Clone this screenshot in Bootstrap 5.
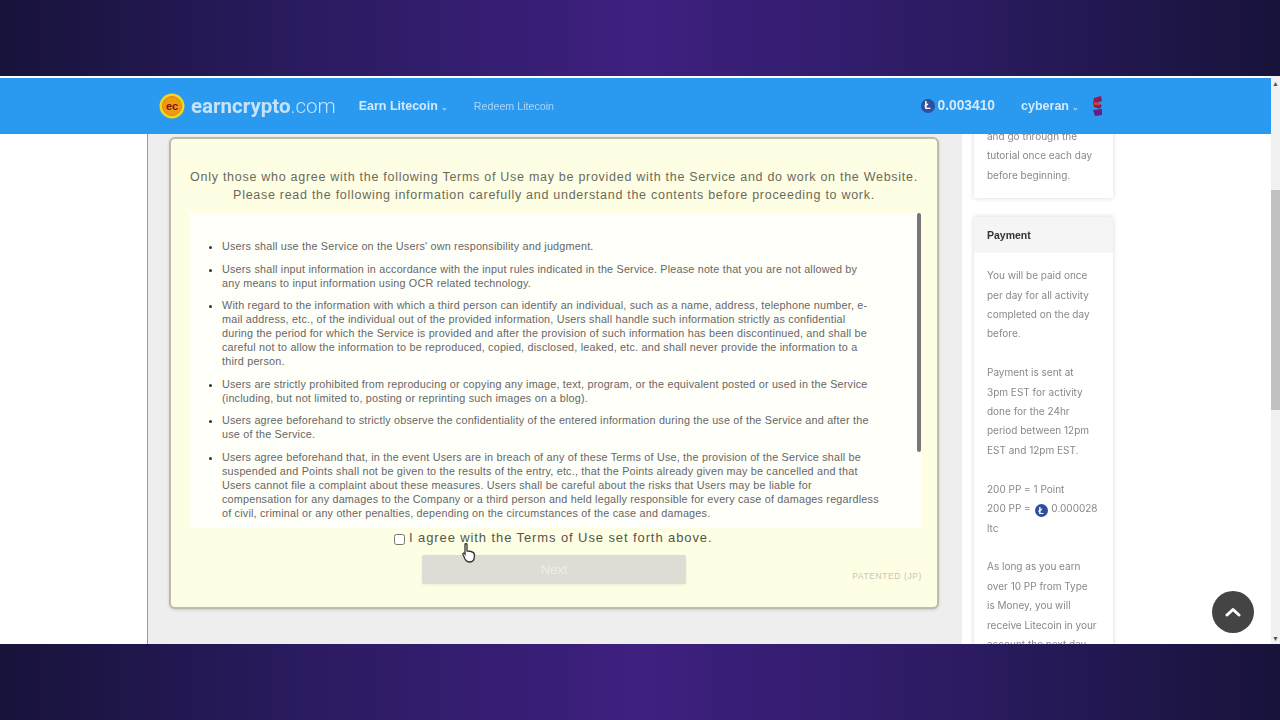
<!DOCTYPE html>
<html lang="en">
<head>
  <meta charset="UTF-8">
  <meta name="viewport" content="width=device-width, initial-scale=1.0">
  <title>earncrypto.com</title>
  <link rel="stylesheet" href="https://cdn.jsdelivr.net/npm/bootstrap@5.3.1/dist/css/bootstrap.min.css">
  <style>
    html, body { height: 720px; overflow: hidden; }
    body { background: #fff; font-family: "Liberation Sans", Arial, sans-serif; }

    .band { height: 76px; background: linear-gradient(90deg, #17133a 0%, #2c1b62 25%, #3e2080 50%, #2c1b62 75%, #17133a 100%); }
    .screen { height: 568px; position: relative; filter: blur(.5px); }
    .stripe { height: 2px; background: #fff; }
    .vbar { width: 9px; background: #f1f1f1; font-size: 7px; color: #555; text-align: center; }
    .vbar-top { height: 38px; line-height: 16px; }
    .vbar-thumb { height: 220px; background: #c1c1c1; margin-top: 76px; }
    .vbar-end { line-height: 10px; margin-top: auto; }

    /* navbar */
    .topbar { height: 56px; background: #2a9af0; padding: 0 0 0 159px; }
    .brand-name { font-family: "Roboto", sans-serif; font-size: 20.5px; font-weight: 700; color: #c6e2fb; margin-left: 6px; }
    .brand-name span { font-weight: 300; }
    .earn-link { font-size: 12.5px; font-weight: 700; color: #d3e9fc; margin-left: 23px; }
    .redeem-link { font-size: 10.7px; color: #a9d5f9; margin-left: 26px; }
    .tiny-caret { font-size: 8px; margin-left: 3px; opacity: .75; }
    .balance { font-size: 13.8px; font-weight: 700; color: #d3e9fc; margin-left: auto; margin-right: 26px; }
    .user-name { font-size: 12.5px; font-weight: 700; color: #d3e9fc; margin-right: 12px; }
    .user-pic { margin-right: 168px; }
    .ltc { display: inline-flex; align-items: center; justify-content: center; width: 14px; height: 14px; border-radius: 50%; background: #2f4f9e; color: #fff; font-size: 10px; font-weight: 700; line-height: 1; margin-right: 3px; }

    /* content */
    .content { height: 510px; overflow: hidden; }
    .left-gap { width: 147px; }
    .main-col { width: 815px; background: #eee; border-left: 1px solid #999; padding: 3px 0 0 21px; }
    .terms-panel { width: 770px; height: 472px; background: #fefee4; border: 2px solid #bdbcaa; border-radius: 6px; box-shadow: 0 1px 3px rgba(0,0,0,.15); padding: 30px 16px 0 18px; }
    .terms-lead { font-size: 12.5px; line-height: 17.5px; letter-spacing: .72px; color: #6a6a5c; text-align: center; margin: 0 2px 9px 0; }
    .terms-box { height: 315px; background: #fffffa; overflow: hidden; position: relative; padding: 26px 0 0 33px; }
    .terms-box ul { margin: 0; padding-left: 0; list-style-position: outside; }
    .terms-box li { font-size: 10.8px; line-height: 14px; color: #666; margin-bottom: 8.5px; letter-spacing: .2px; white-space: nowrap; }
    .terms-box li::marker { color: #333; }
    .thumb { position: absolute; right: 0; top: 0; width: 4px; height: 239px; background: #777; border-radius: 2px; }
    .agree-row { height: 27px; font-size: 13px; line-height: 20px; letter-spacing: .9px; color: #55554a; padding-left: 205px; }
    .agree-row input { width: 11px; height: 11px; margin: 6px 4px 0 0; border: 1px solid #888; border-radius: 2px; background: #fff; }
    .next-row { position: relative; }
    .next-btn { width: 264px; height: 29px; margin-left: 233px; padding: 0; background: #dddcd5 !important; border: 0; font-size: 13px; color: #eeeee8 !important; opacity: 1 !important; border-radius: 2px; box-shadow: 0 1px 3px rgba(0,0,0,.08); }
    .patented { position: absolute; right: -1px; top: 15px; font-size: 8.5px; color: #c6c6b4; letter-spacing: .6px; }

    .side-col { width: 139px; margin-left: 12px; margin-top: -20px; }
    .side-card { border: 0; border-radius: 0; box-shadow: 0 0 5px rgba(0,0,0,.16); margin-bottom: 19px; }
    .side-card .card-header { height: 36px; padding: 0 13px; line-height: 36px; background: #f5f5f5; border: 0; border-radius: 0; font-size: 10.5px; font-weight: 700; color: #333; }
    .side-card .card-body { padding: 13px; font-family: "Inter", sans-serif; font-size: 10px; line-height: 19.4px; color: #888; white-space: nowrap; }
    .side-card .ltc { width: 13px; height: 13px; font-size: 9px; margin: 0 1px; vertical-align: -2px; }

    .to-top { position: absolute; left: 1212px; top: 515px; width: 42px; height: 42px; border-radius: 50%; background: #444; }
    .hand { position: absolute; left: 462px; top: 467px; }
  </style>
</head>
<body>
  <div class="band"></div>
  <div class="screen d-flex">
    <div class="flex-grow-1">
      <div class="stripe"></div>
      <nav class="navbar navbar-expand topbar flex-nowrap justify-content-start">
        <svg width="26" height="26" viewBox="0 0 26 26">
          <circle cx="13" cy="13" r="12.5" fill="#f7d322"/>
          <circle cx="13" cy="13" r="9.5" fill="#ef9b10" stroke="#d08a12" stroke-width="1"/>
          <text x="13" y="16.5" text-anchor="middle" font-family="Liberation Sans" font-size="11" font-weight="700" fill="#7a1414">ec</text>
        </svg>
        <span class="brand-name">earncrypto<span>.com</span></span>
        <span class="earn-link">Earn Litecoin<span class="tiny-caret">&#8964;</span></span>
        <span class="redeem-link">Redeem Litecoin</span>
        <span class="balance d-flex align-items-center"><span class="ltc">Ł</span>0.003410</span>
        <span class="user-name">cyberan<span class="tiny-caret">&#8964;</span></span>
        <svg class="user-pic" width="12" height="20" viewBox="0 0 12 20">
          <path d="M3 2 L10 0 L11 5 L6 7 L11 9 L9 13 L3 11 L2 7 Z" fill="#8e1c5c"/>
          <path d="M3 6 L9 7 L9 9 L3 9 Z" fill="#d8402a"/>
          <path d="M2 14 L11 13 L11 19 L4 20 Z" fill="#6a1a8a"/>
        </svg>
      </nav>
      <div class="content d-flex">
        <div class="left-gap"></div>
        <div class="main-col">
          <div class="terms-panel">
            <p class="terms-lead">Only those who agree with the following Terms of Use may be provided with the Service and do work on the Website.<br>Please read the following information carefully and understand the contents before proceeding to work.</p>
            <div class="terms-box">
              <div class="thumb"></div>
              <ul>
                <li>Users shall use the Service on the Users' own responsibility and judgment.</li>
                <li>Users shall input information in accordance with the input rules indicated in the Service. Please note that you are not allowed by<br>any means to input information using OCR related technology.</li>
                <li>With regard to the information with which a third person can identify an individual, such as a name, address, telephone number, e-<br>mail address, etc., of the individual out of the provided information, Users shall handle such information strictly as confidential<br>during the period for which the Service is provided and after the provision of such information has been discontinued, and shall be<br>careful not to allow the information to be reproduced, copied, disclosed, leaked, etc. and shall never provide the information to a<br>third person.</li>
                <li>Users are strictly prohibited from reproducing or copying any image, text, program, or the equivalent posted or used in the Service<br>(including, but not limited to, posting or reprinting such images on a blog).</li>
                <li>Users agree beforehand to strictly observe the confidentiality of the entered information during the use of the Service and after the<br>use of the Service.</li>
                <li>Users agree beforehand that, in the event Users are in breach of any of these Terms of Use, the provision of the Service shall be<br>suspended and Points shall not be given to the results of the entry, etc., that the Points already given may be cancelled and that<br>Users cannot file a complaint about these measures. Users shall be careful about the risks that Users may be liable for<br>compensation for any damages to the Company or a third person and held legally responsible for every case of damages regardless<br>of civil, criminal or any other penalties, depending on the circumstances of the case and damages.</li>
              </ul>
            </div>
            <label class="agree-row d-flex align-items-start">
              <input type="checkbox" class="flex-shrink-0">I agree with the Terms of Use set forth above.
            </label>
            <div class="next-row">
              <button class="btn next-btn" disabled>Next</button>
              <span class="patented">PATENTED (JP)</span>
            </div>
          </div>
        </div>
        <div class="side-col">
          <div class="card side-card">
            <div class="card-body">and go through the<br>tutorial once each day<br>before beginning.</div>
          </div>
          <div class="card side-card">
            <div class="card-header">Payment</div>
            <div class="card-body">You will be paid once<br>per day for all activity<br>completed on the day<br>before.<br><br>Payment is sent at<br>3pm EST for activity<br>done for the 24hr<br>period between 12pm<br>EST and 12pm EST.<br><br>200 PP = 1 Point<br>200 PP = <span class="ltc">Ł</span> 0.000028<br>ltc<br><br>As long as you earn<br>over 10 PP from Type<br>is Money, you will<br>receive Litecoin in your<br>account the next day</div>
          </div>
        </div>
      </div>
    </div>
    <div class="vbar d-flex flex-column">
      <div class="vbar-top">&#9650;</div>
      <div class="vbar-thumb"></div>
      <div class="vbar-end">&#9660;</div>
    </div>
    <div class="to-top d-flex align-items-center justify-content-center">
      <svg width="16" height="10" viewBox="0 0 16 10"><path d="M2 8 L8 2.5 L14 8" fill="none" stroke="#fff" stroke-width="3" stroke-linecap="round" stroke-linejoin="round"/></svg>
    </div>
    <svg class="hand" width="14" height="20" viewBox="0 0 14 20">
      <path d="M3 1.5 C3 0.5 5 0.5 5 1.5 L5 8 L9 8.5 C11 9 12.5 10 12.5 12 L12 16 C11.5 18 10 19 7.5 19 C5 19 4 18 3 16 L1 11.5 C0.5 10 2 9.5 3 11 Z" fill="#fff" stroke="#333" stroke-width="1.3"/>
    </svg>
  </div>
  <div class="band"></div>
  <script src="https://cdn.jsdelivr.net/npm/bootstrap@5.3.1/dist/js/bootstrap.bundle.min.js"></script>
</body>
</html>
